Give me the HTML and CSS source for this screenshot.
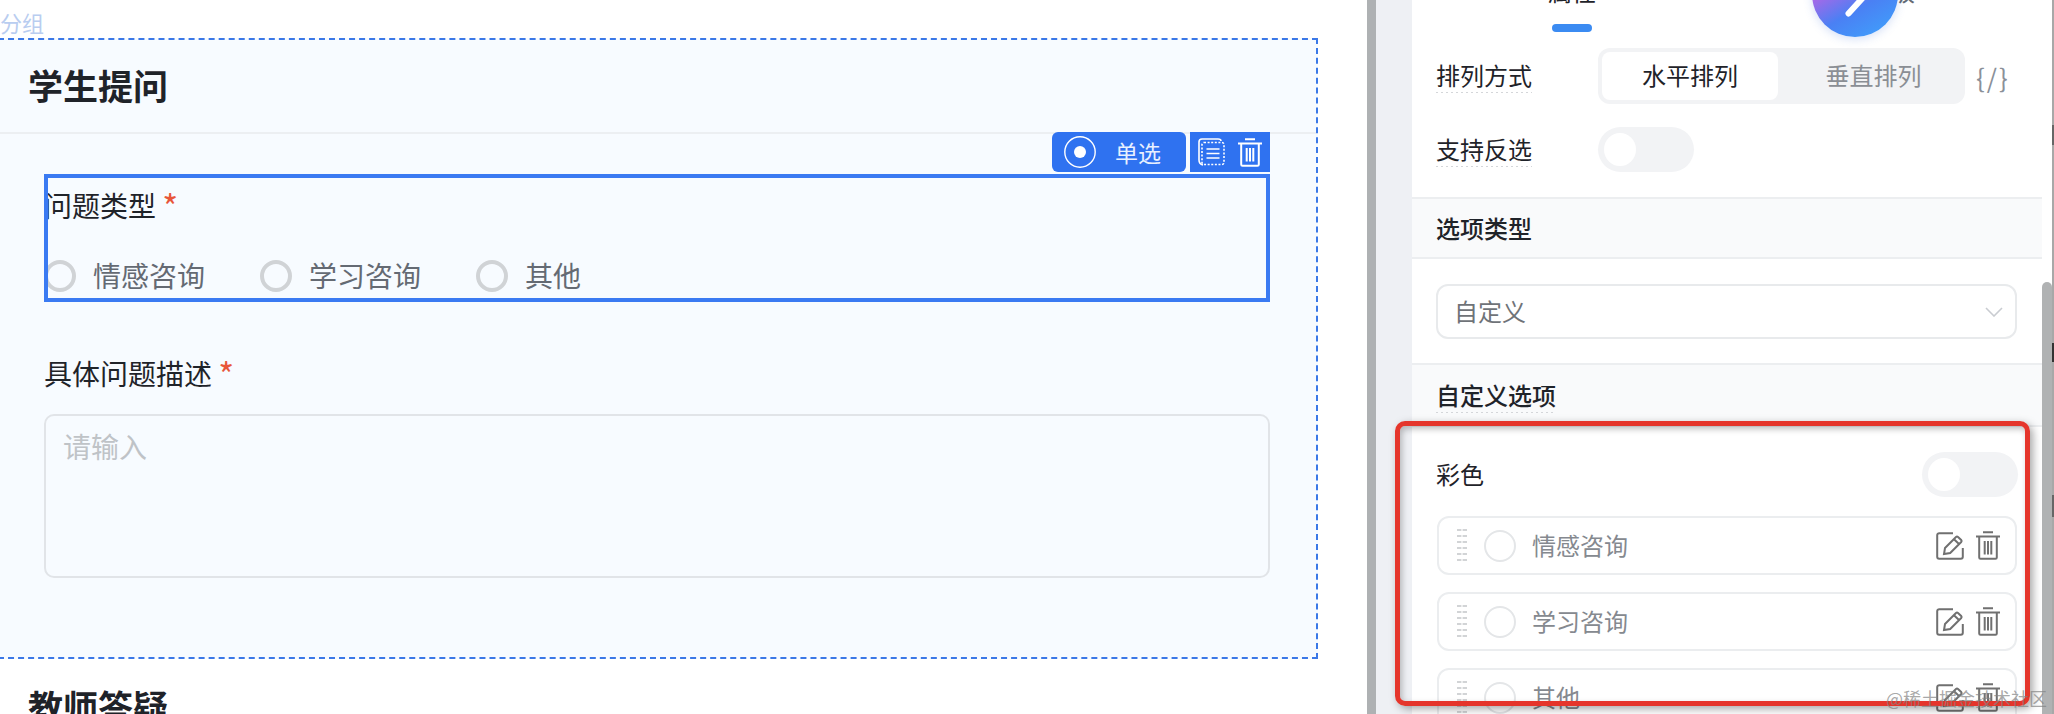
FILE: index.html
```html
<!DOCTYPE html>
<html lang="zh-CN">
<head>
    <meta charset="UTF-8">
    <meta name="viewport" content="width=device-width, initial-scale=1.0">
    <title>表单设计器</title>
    <link rel="stylesheet" href="styles.css">
</head>
<body>
    <svg class="sprite" width="0" height="0">
        <symbol id="icon-trash" viewBox="0 0 24 29">
            <path d="M7 1.2H17M0 5.5H24M3.2 5.5V26.5a1.3 1.3 0 0 0 1.3 1.3H19.5a1.3 1.3 0 0 0 1.3-1.3V5.5M8.7 10V23.5M12 10V23.5M15.3 10V23.5" fill="none" stroke="currentColor" stroke-width="2"/>
        </symbol>
        <symbol id="icon-edit" viewBox="0 0 28 28">
            <path d="M17 1.2H3.2a2 2 0 0 0-2 2V24.8a2 2 0 0 0 2 2H24.8a2 2 0 0 0 2-2V16" fill="none" stroke="currentColor" stroke-width="2"/>
            <path d="M9 16 20 5a1.5 1.5 0 0 1 2 0L25.2 8a1.5 1.5 0 0 1 0 2L14.2 21 8 22ZM18 7.2 23 12" fill="none" stroke="currentColor" stroke-width="2"/>
        </symbol>
    </svg>

    <div class="page">
        <main class="canvas">
            <div class="group-tag">分组</div>
            <section class="group">
                <h2 class="group-title">学生提问</h2>
                <div class="group-body">
                    <div class="field field-active">
                        <div class="toolbar">
                            <div class="tool-type">
                                <svg width="32" height="32" viewBox="0 0 32 32">
                                    <circle cx="16" cy="16" r="15.2" fill="none" stroke="#fff" stroke-width="1.4"/>
                                    <circle cx="16" cy="16" r="6" fill="#fff"/>
                                </svg>
                                <span>单选</span>
                            </div>
                            <div class="tool-actions">
                                <svg width="28" height="29" viewBox="0 0 28 29">
                                    <path d="M24 3Q24 1 21 1H5Q2 1 2 4V22Q2 26 6 27" fill="none" stroke="#fff" stroke-width="1.6"/>
                                    <rect x="5" y="4.5" width="22" height="22" rx="2" fill="none" stroke="#fff" stroke-width="1.6" stroke-dasharray="2 1.6"/>
                                    <path d="M9.5 11H22.5M9.5 15.5H22.5M9.5 20H22.5" stroke="#fff" stroke-width="1.6"/>
                                </svg>
                                <svg class="tool-trash" width="24" height="29"><use href="#icon-trash"/></svg>
                            </div>
                        </div>
                        <div class="field-label">问题类型 <span class="req">*</span></div>
                        <div class="radio-group">
                            <label class="radio"><i></i>情感咨询</label>
                            <label class="radio"><i></i>学习咨询</label>
                            <label class="radio"><i></i>其他</label>
                        </div>
                    </div>
                    <div class="field field-text">
                        <div class="field-label">具体问题描述 <span class="req">*</span></div>
                        <div class="textarea">请输入</div>
                    </div>
                </div>
            </section>
            <h2 class="next-title">教师答疑</h2>
        </main>

        <div class="side-edge"></div>
        <div class="side-gap"></div>

        <aside class="panel">
            <div class="tabs">
                <div class="tab">
                    <span>属性</span>
                    <i class="tab-bar"></i>
                </div>
                <div class="tab tab-second"><span>高级</span></div>
            </div>

            <div class="prop-row">
                <span class="prop-label"><span class="hint">排列方式</span></span>
                <div class="segment">
                    <span class="segment-item active">水平排列</span>
                    <span class="segment-item">垂直排列</span>
                </div>
                <span class="code-btn">{/}</span>
            </div>
            <div class="prop-row prop-row-switch">
                <span class="prop-label"><span class="hint">支持反选</span></span>
                <span class="switch"></span>
            </div>

            <h3 class="section-head">选项类型</h3>
            <div class="section-body">
                <div class="select">
                    <span class="raised">自定义</span>
                    <svg width="18" height="10" viewBox="0 0 18 10"><path d="M1 1 9 9 17 1" fill="none" stroke="#c9ccd1" stroke-width="1.6"/></svg>
                </div>
            </div>

            <h3 class="section-head section-head-second"><span class="hint">自定义选项</span></h3>
            <div class="colour-row">
                <span class="raised">彩色</span>
                <span class="switch"></span>
            </div>
            <div class="option">
                <svg class="drag" width="10" height="34"><path d="M2.2 0V34M7.8 0V34"/></svg>
                <i class="option-radio"></i>
                <span class="raised">情感咨询</span>
                <div class="option-actions">
                    <svg width="28" height="28"><use href="#icon-edit"/></svg>
                    <svg width="24" height="29"><use href="#icon-trash"/></svg>
                </div>
            </div>
            <div class="option">
                <svg class="drag" width="10" height="34"><path d="M2.2 0V34M7.8 0V34"/></svg>
                <i class="option-radio"></i>
                <span class="raised">学习咨询</span>
                <div class="option-actions">
                    <svg width="28" height="28"><use href="#icon-edit"/></svg>
                    <svg width="24" height="29"><use href="#icon-trash"/></svg>
                </div>
            </div>
            <div class="option">
                <svg class="drag" width="10" height="34"><path d="M2.2 0V34M7.8 0V34"/></svg>
                <i class="option-radio"></i>
                <span class="raised">其他</span>
                <div class="option-actions">
                    <svg width="28" height="28"><use href="#icon-edit"/></svg>
                    <svg width="24" height="29"><use href="#icon-trash"/></svg>
                </div>
            </div>
        </aside>

        <div class="gutter"><div class="thumb"></div></div>
        <div class="window-edge"></div>

        <!-- overlays -->
        <div class="fab">
            <svg width="86" height="86" viewBox="0 0 86 86"><path d="M57 40 36.5 62.5" stroke="#fff" stroke-width="6" stroke-linecap="round"/></svg>
        </div>
        <div class="annotation"></div>
        <div class="watermark">@稀土掘金技术社区</div>
    </div>
</body>
</html>
```

FILE: styles.css
```css
* {
    box-sizing: border-box;
}

html, body {
    margin: 0;
    padding: 0;
    height: 100%;
}

body {
    font-family: "Noto Sans CJK SC", "Noto Sans", sans-serif;
    color: #1f2329;
    background-color: #fff;
    overflow: hidden;
}

h2, h3 {
    margin: 0;
}

.sprite {
    display: block;
    height: 0;
}

.page {
    position: relative;
    display: flex;
    height: 714px;
    overflow: hidden;
}

/* canvas on the left */
.canvas {
    width: 1367px;
    flex: none;
    overflow: hidden;
}

.group-tag {
    height: 38px;
    padding-top: 11px;
    font-size: 22px;
    line-height: 22px;
    color: #b9cdf0;
}

.group {
    width: 1320px;
    height: 621px;
    margin-left: -2px;
    border: 2px dashed #3b78e7;
    background-color: #f7fbff;
}

.group-title {
    height: 94px;
    padding-left: 28px;
    font-size: 35px;
    font-weight: 700;
    line-height: 90px;
    border-bottom: 2px solid #eceff2;
}

.group-body {
    padding: 40px 46px 0 44px;
}

.field {
    position: relative;
}

.field-active {
    height: 128px;
    padding-top: 11px;
    outline: 4px solid #3a7af2;
    outline-offset: -4px;
}

.field-text {
    margin-top: 51px;
}

.field-label {
    font-size: 28px;
    line-height: 40px;
}

.req {
    font-size: 34px;
    line-height: 0;
    vertical-align: -3px;
    color: #e8563a;
}

.radio-group {
    display: flex;
    gap: 55px;
    margin-top: 35px;
}

.radio {
    display: flex;
    align-items: flex-start;
    gap: 17px;
    height: 32px;
    font-size: 28px;
    line-height: 30px;
    color: #646a73;
}

.radio i {
    width: 32px;
    height: 32px;
    border: 4px solid #d0d3d6;
    border-radius: 50%;
}

.textarea {
    height: 164px;
    margin-top: 21px;
    padding: 10px 17px;
    font-size: 28px;
    line-height: 40px;
    color: #bfc3c7;
    border: 2px solid #e1e4e8;
    border-radius: 10px;
}

.next-title {
    padding: 29px 0 0 28px;
    font-size: 35px;
    font-weight: 700;
    line-height: 36px;
}

/* toolbar above the selected field */
.toolbar {
    position: absolute;
    top: -42px;
    right: 0;
    display: flex;
    gap: 4px;
    height: 40px;
    color: #fff;
}

.tool-type {
    display: flex;
    align-items: center;
    width: 134px;
    padding-left: 12px;
    font-size: 23px;
    color: #e8f0ff;
    background-color: #2f72f0;
    border-radius: 6px;
}

.tool-type span {
    margin-left: 19px;
    line-height: 40px;
}

.tool-actions {
    display: flex;
    align-items: center;
    width: 80px;
    padding-left: 7px;
    background-color: #2f72f0;
}

.tool-trash {
    margin-left: 13px;
}

/* right panel */
.side-edge {
    width: 9px;
    flex: none;
    background-color: #aeb1b3;
}

.side-gap {
    width: 36px;
    flex: none;
    background-color: #eef0f4;
}

.panel {
    width: 630px;
    flex: none;
    font-size: 24px;
    background-color: #fff;
}

.tabs {
    display: flex;
    height: 48px;
    padding-left: 136px;
}

.tab {
    display: flex;
    flex-direction: column;
    align-items: center;
    width: 48px;
    line-height: 30px;
    margin-top: -24px;
}

.tab-second {
    margin-left: 271px;
    color: #646a73;
}

.tab-bar {
    width: 40px;
    height: 8px;
    margin-top: 18px;
    background-color: #3b8bf2;
    border-radius: 4px;
}

.prop-row {
    display: flex;
    align-items: center;
    padding-left: 24px;
}

.prop-row-switch {
    margin-top: 23px;
    margin-bottom: 25px;
}

.prop-label {
    width: 162px;
    flex: none;
    padding-bottom: 2px;
    line-height: 30px;
}

.hint {
    padding-bottom: 1px;
    background-image: linear-gradient(90deg, #d4d6d9 50%, transparent 50%);
    background-size: 5px 1px;
    background-position: 0 100%;
    background-repeat: repeat-x;
}

.raised {
    padding-bottom: 3px;
}

.segment {
    display: flex;
    width: 367px;
    height: 56px;
    padding: 4px;
    background-color: #f2f3f5;
    border-radius: 12px;
}

.segment-item {
    flex: 1;
    padding-left: 8px;
    text-align: center;
    line-height: 46px;
    color: #8a8e94;
}

.segment-item.active {
    width: 176px;
    flex: none;
    padding-left: 0;
    color: #1f2329;
    background-color: #fff;
    border-radius: 8px;
}

.code-btn {
    margin-left: 11px;
    font-size: 26px;
    letter-spacing: 2px;
    color: #8a9099;
}

.switch {
    display: block;
    width: 96px;
    height: 45px;
    padding: 6px;
    background-color: #f2f3f5;
    border-radius: 23px;
}

.switch::before {
    content: "";
    display: block;
    width: 32px;
    height: 33px;
    background-color: #fff;
    border-radius: 50%;
}

.section-head {
    height: 62px;
    padding-left: 24px;
    font-size: 24px;
    font-weight: 500;
    line-height: 58px;
    background-color: #f9fafb;
    border-top: 2px solid #eceef0;
    border-bottom: 2px solid #eceef0;
}

.section-head-second {
    height: 64px;
    line-height: 60px;
}

.section-body {
    padding: 25px 25px 24px 24px;
}

.select {
    display: flex;
    align-items: center;
    justify-content: space-between;
    height: 55px;
    padding: 0 12px 0 16px;
    color: #6f7378;
    border: 2px solid #e8eaec;
    border-radius: 12px;
}

.colour-row {
    display: flex;
    align-items: center;
    justify-content: space-between;
    margin: 25px 24px 19px 24px;
}

.option {
    display: flex;
    align-items: center;
    height: 59px;
    margin: 0 25px 17px 25px;
    padding: 0 15px 0 18px;
    color: #85898f;
    border: 2px solid #ebedef;
    border-radius: 12px;
}

.drag {
    flex: none;
}

.drag path {
    fill: none;
    stroke: #d2d4d6;
    stroke-width: 4.4;
    stroke-dasharray: 2 4;
}

.option-radio {
    width: 32px;
    height: 32px;
    margin: 0 16px 0 17px;
    flex: none;
    border: 2px solid #e4e6e8;
    border-radius: 50%;
}

.option-actions {
    display: flex;
    align-items: center;
    gap: 12px;
    margin-left: auto;
    color: #707070;
}

.gutter {
    width: 10px;
    flex: none;
    padding-top: 282px;
}

.thumb {
    width: 10px;
    height: 100%;
    background-color: #b0b2b3;
    border-radius: 5px 5px 0 0;
}

.window-edge {
    flex: 1;
    background: linear-gradient(
        #a8a8a8 125px, #666 125px, #666 145px, #a8a8a8 145px,
        #a8a8a8 343px, #333 343px, #333 362px, #a8a8a8 362px,
        #a8a8a8 495px, #666 495px, #666 517px, #a8a8a8 517px
    );
}

/* things lying over the panel */
.fab {
    position: absolute;
    top: -49px;
    left: 1812px;
    width: 86px;
    height: 86px;
    background: linear-gradient(150deg, #a06ae8 38%, #4a80f4 62%, #3fa0fb 95%);
    border-radius: 50%;
    box-shadow: 0 2px 10px rgba(60, 110, 220, 0.22);
}

.fab svg {
    display: block;
}

.annotation {
    position: absolute;
    top: 421px;
    left: 1395px;
    width: 635px;
    height: 285px;
    border: 5px solid #e5352b;
    border-radius: 10px;
    box-shadow: 3px 3px 8px rgba(0, 0, 0, 0.35), inset 2px 3px 6px rgba(0, 0, 0, 0.25);
}

.watermark {
    position: absolute;
    right: 7px;
    bottom: 4px;
    font-size: 18px;
    line-height: 24px;
    color: rgba(130, 130, 130, 0.7);
}
```
